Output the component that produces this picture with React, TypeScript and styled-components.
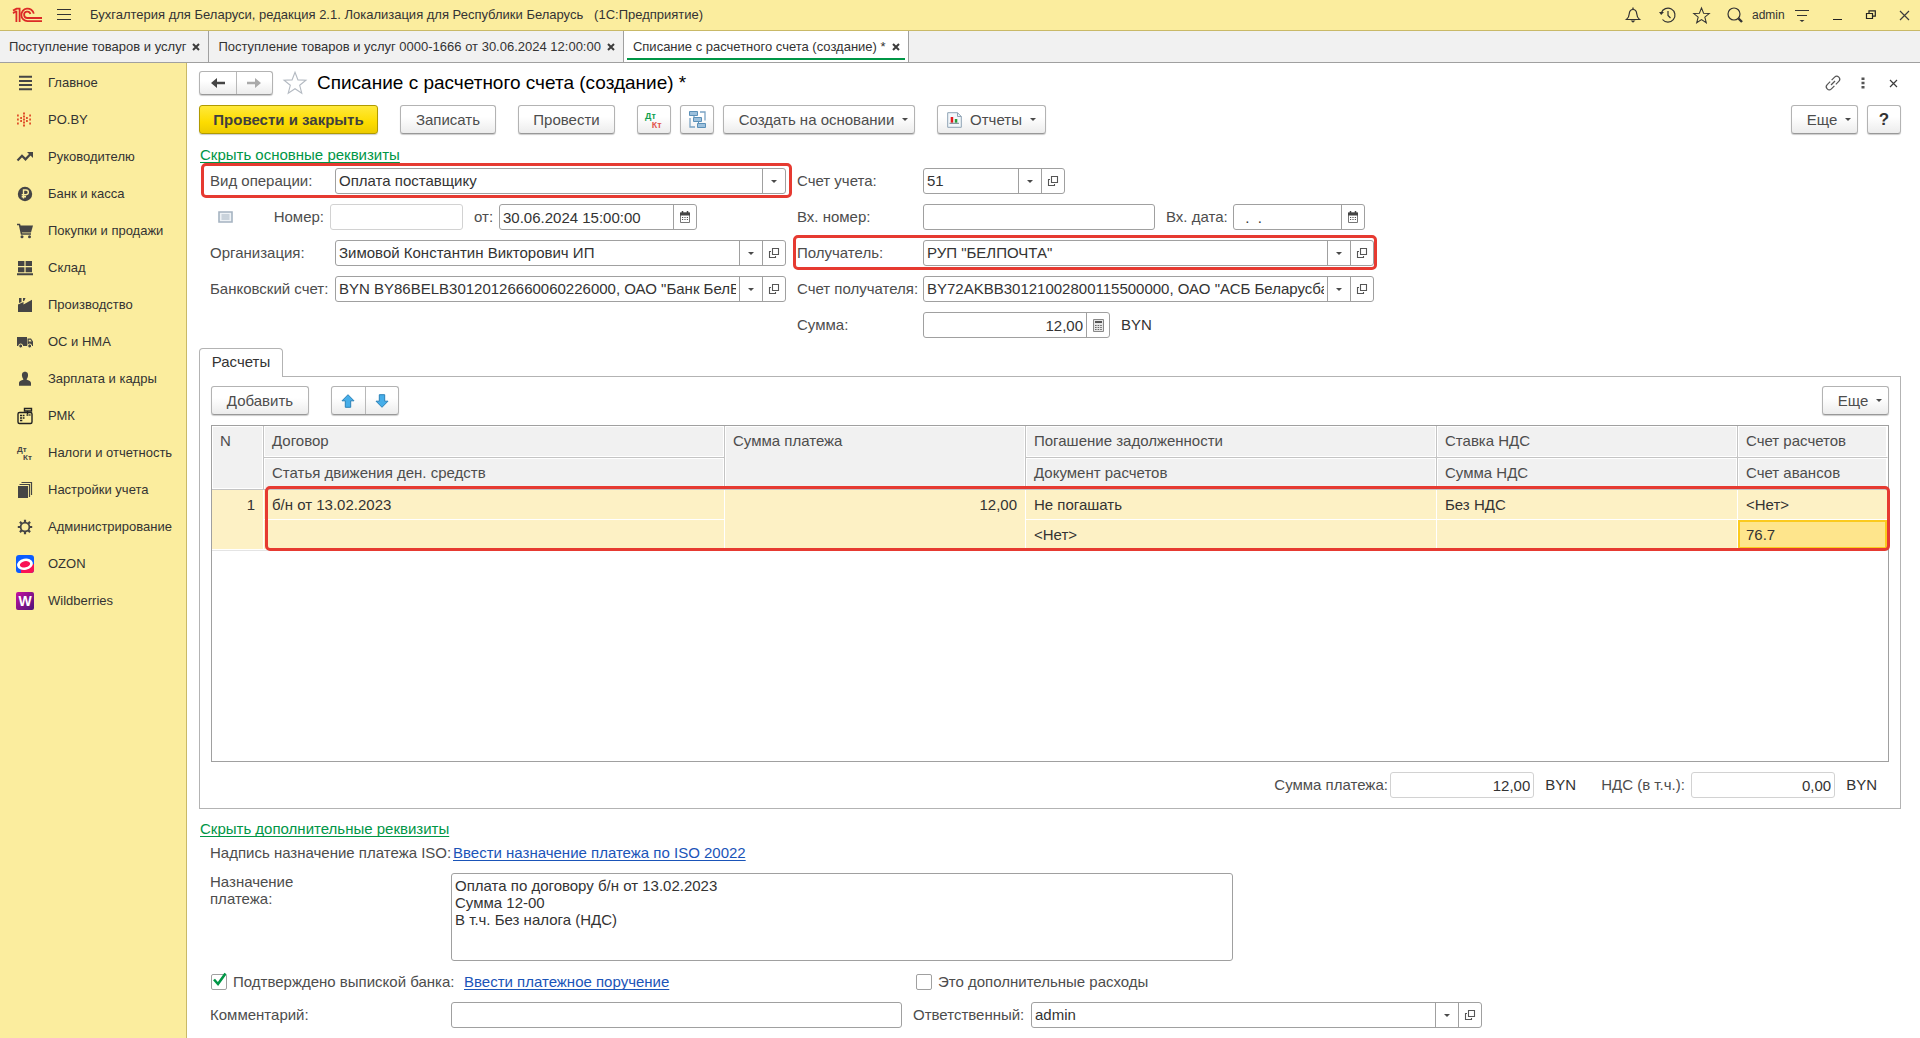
import React, { useState } from "react";
import type { ReactNode } from "react";
import styled, { createGlobalStyle, css } from "styled-components";

const color = {
  yellow: "#fbed9e",
  yellowEdge: "#c9b967",
  text: "#333333",
  label: "#4d4d4d",
  line: "#a0a0a0",
  green: "#009646",
  blue: "#1a54b8",
  red: "#e63a31",
};

const GlobalStyle = createGlobalStyle`
  *, *::before, *::after { box-sizing: border-box; }
  body { margin: 0; background: #fff; }
  body, button, input, select, textarea {
    font-family: "Liberation Sans", Arial, sans-serif;
    font-size: 15px;
    line-height: 18px;
    color: ${color.text};
  }
  svg { display: block; flex: none; overflow: visible; }
`;

/* ---------- shell ---------- */

const Shell = styled.div`
  min-height: 100vh;
  display: flex;
  flex-direction: column;
`;

const TopBar = styled.header`
  height: 31px;
  flex: none;
  display: flex;
  align-items: center;
  padding-left: 12px;
  background: ${color.yellow};
  border-bottom: 1px solid ${color.yellowEdge};
`;

const AppTitle = styled.h1`
  margin: 0;
  padding-left: 5px;
  flex: 1;
  font-size: 13px;
  font-weight: normal;
`;

const IconButton = styled.button<{ $w?: number }>`
  width: ${(p) => p.$w ?? 34}px;
  height: 24px;
  padding: 0;
  border: 0;
  background: none;
  display: flex;
  align-items: center;
  justify-content: center;
`;

const UserName = styled.span`
  width: 32px;
  text-align: center;
  font-size: 12px;
`;

const TabBar = styled.nav`
  height: 32px;
  flex: none;
  display: flex;
  background: #f1f1f1;
  border-bottom: 1px solid ${color.line};
`;

const WindowTab = styled.div<{ $active?: boolean }>`
  display: flex;
  align-items: center;
  padding: 0 2px 0 9px;
  border-right: 1px solid ${color.line};
  ${(p) =>
    p.$active &&
    css`
      background: linear-gradient(${color.green}, ${color.green}) 50% 27px / calc(100% - 6px) 2px no-repeat #fff;
    `}
`;

const TabTitle = styled.button`
  padding: 0;
  border: 0;
  background: none;
  font-size: 13px;
  white-space: nowrap;
`;

const TabClose = styled.button`
  width: 20px;
  height: 20px;
  padding: 0;
  border: 0;
  background: none;
  display: flex;
  align-items: center;
  justify-content: center;
`;

const Columns = styled.div`
  flex: 1;
  display: flex;
`;

const Sidebar = styled.nav`
  width: 187px;
  flex: none;
  padding-top: 1px;
  background: ${color.yellow};
  border-right: 1px solid ${color.yellowEdge};
`;

const SideLink = styled.a`
  height: 37px;
  display: flex;
  align-items: center;
  gap: 14px;
  padding-left: 16px;
  font-size: 13px;
  color: ${color.text};
  text-decoration: none;
  white-space: nowrap;
`;

const Main = styled.main`
  flex: 1;
  min-width: 0;
  display: flex;
  flex-direction: column;
  padding: 8px 19px 10px 12px;
`;

/* ---------- buttons ---------- */

const raised = css`
  border: 1px solid #b3b3b3;
  border-bottom-color: #989898;
  border-radius: 3px;
  background: linear-gradient(#fff 40%, #ececec);
  box-shadow: 0 1px 1px rgba(0, 0, 0, 0.2);
  color: ${color.label};
`;

const Button = styled.button<{ $w: number; $primary?: boolean; $menu?: boolean; $left?: number }>`
  ${raised}
  width: ${(p) => p.$w}px;
  height: 29px;
  padding: 0 0 0 ${(p) => (p.$menu ? 9 : 0)}px;
  margin-left: ${(p) => p.$left ?? 0}px;
  display: flex;
  align-items: center;
  justify-content: center;
  gap: 8px;
  white-space: nowrap;
  ${(p) =>
    p.$primary &&
    css`
      border-color: #b09a00;
      background: linear-gradient(#ffe93b, #fddc00 60%, #edcb00);
      font-weight: bold;
      color: #3f3f3f;
    `}
`;

const ButtonPair = styled.div<{ $w: number; $h: number; $left?: number }>`
  ${raised}
  width: ${(p) => p.$w}px;
  height: ${(p) => p.$h}px;
  margin-left: ${(p) => p.$left ?? 0}px;
  display: flex;
`;

const PairHalf = styled.button`
  flex: 1;
  padding: 0;
  border: 0;
  background: none;
  display: flex;
  align-items: center;
  justify-content: center;
  & + & { border-left: 1px solid #b8b8b8; }
`;

const Caret = styled.i`
  border: 3px solid transparent;
  border-top: 3px solid #4a4a4a;
  border-bottom: 0;
`;

const HelpMark = styled.b`
  font-size: 17px;
  color: #333;
`;

/* ---------- page parts ---------- */

const TitleRow = styled.div`
  height: 24px;
  display: flex;
  align-items: center;
  margin-right: -7px;
`;

const FormTitle = styled.h2`
  margin: 0;
  flex: 1;
  font-size: 19px;
  line-height: 24px;
  font-weight: normal;
  color: #000;
`;

const Toolbar = styled.div<{ $top?: number }>`
  display: flex;
  align-items: center;
  margin-top: ${(p) => p.$top ?? 0}px;
`;

const Spacer = styled.div`
  flex: 1;
`;

const Link = styled.a<{ $green?: boolean }>`
  color: ${(p) => (p.$green ? color.green : color.blue)};
  text-decoration: underline;
  text-decoration-thickness: 1px;
  text-underline-offset: 2px;
  text-decoration-skip-ink: none;
`;

const GroupLink = styled.div<{ $top: number }>`
  margin-top: ${(p) => p.$top}px;
  padding-left: 1px;
  height: 18px;
`;

const FormGrid = styled.div`
  display: grid;
  grid-template-columns: 576px 577px;
  gap: 10px 11px;
  margin: 4px 0 0 11px;
`;

const Row = styled.div<{ $top?: number }>`
  position: relative;
  display: flex;
  align-items: center;
  margin-top: ${(p) => p.$top ?? 0}px;
`;

const DetailRow = styled(Row)`
  margin-left: 11px;
`;

const Marked = styled(Row)<{ $lead: number; $tail: number }>`
  &::after {
    content: "";
    position: absolute;
    inset: -5px -${(p) => p.$tail}px -4px -${(p) => p.$lead}px;
    border: 3px solid ${color.red};
    border-radius: 5px;
    pointer-events: none;
  }
`;

const Label = styled.label<{ $w?: number; $pad?: number; $end?: boolean }>`
  width: ${(p) => (p.$w ? `${p.$w}px` : "auto")};
  padding-left: ${(p) => p.$pad ?? 0}px;
  ${(p) => p.$end && "text-align: right; padding-right: 6px;"}
  flex: none;
  color: ${color.label};
  white-space: nowrap;
`;

const Frame = styled.div<{ $w: number; $pale?: boolean }>`
  width: ${(p) => p.$w}px;
  height: 26px;
  flex: none;
  display: flex;
  overflow: hidden;
  background: #fff;
  border: 1px solid ${(p) => (p.$pale ? "#d2d2d2" : color.line)};
  border-radius: 3px;
`;

const bare = css`
  flex: 1;
  min-width: 0;
  width: 0;
  height: 24px;
  margin: 0 3px;
  padding: 0;
  border: 0;
  outline: 0;
  background: none;
`;

const TextInput = styled.input<{ $right?: boolean }>`
  ${bare}
  text-align: ${(p) => (p.$right ? "right" : "left")};
  &::placeholder { color: ${color.text}; opacity: 1; }
`;

const Select = styled.select`
  ${bare}
  appearance: none;
  text-overflow: clip;
`;

const FieldButton = styled.button`
  width: 23px;
  flex: none;
  padding: 0;
  border: 0;
  border-left: 1px solid ${color.line};
  background: none;
  display: flex;
  align-items: center;
  justify-content: center;
`;

const Unit = styled.span`
  padding-left: 11px;
`;

/* ---------- tabular section ---------- */

const PageTab = styled.button`
  align-self: flex-start;
  z-index: 1;
  width: 84px;
  height: 29px;
  margin: 10px 0 -1px;
  padding: 0 0 2px;
  border: 1px solid #b3b3b3;
  border-bottom: 0;
  border-radius: 4px 4px 0 0;
  background: #fff;
`;

const Panel = styled.section`
  flex: 1;
  display: flex;
  flex-direction: column;
  padding: 9px 11px 10px;
  border: 1px solid #b3b3b3;
`;

const TableBox = styled.div`
  flex: 1;
  margin: 10px 0;
  border: 1px solid ${color.line};
`;

const TableMark = styled.div`
  position: relative;
  &::after {
    content: "";
    position: absolute;
    inset: 60px -2px 0 53px;
    border: 3px solid ${color.red};
    border-radius: 5px;
    pointer-events: none;
  }
`;

const Table = styled.table`
  width: 100%;
  table-layout: fixed;
  border-spacing: 0;
  border-bottom: 1px solid #e4e4e4;
`;

const HeadCell = styled.th`
  height: 32px;
  padding: 0 0 2px 8px;
  background: #f1f1f1;
  border-right: 1px solid #c4c4c4;
  border-bottom: 1px solid #c4c4c4;
  box-shadow: inset 0 0 0 1px #fff;
  font-weight: normal;
  text-align: left;
  color: ${color.label};
  &[rowspan] { vertical-align: top; padding-top: 6px; }
  &:last-child { border-right-color: #fff; }
`;

const Cell = styled.td<{ $right?: boolean; $current?: boolean }>`
  height: 30px;
  padding: 0 8px;
  background: #fdf1c5;
  border-right: 1px solid #fff;
  border-bottom: 1px solid #fff;
  text-align: ${(p) => (p.$right ? "right" : "left")};
  &[rowspan] { vertical-align: top; padding-top: 6px; }
  ${(p) =>
    p.$current &&
    css`
      background: #fee58c;
      box-shadow: inset 0 0 0 2px #fbca1e;
    `}
`;

const Totals = styled.div`
  display: flex;
  align-items: center;
  justify-content: flex-end;
  padding-right: 12px;
`;

const Memo = styled.textarea`
  width: 782px;
  height: 88px;
  padding: 3px;
  border: 1px solid ${color.line};
  border-radius: 3px;
  outline: 0;
  resize: none;
  line-height: 17px;
`;

const MemoLabel = styled(Label)`
  align-self: flex-start;
  line-height: 17px;
`;

const Check = styled.input`
  appearance: none;
  width: 16px;
  height: 16px;
  margin: 0 6px 0 1px;
  border: 1px solid ${color.line};
  border-radius: 2px;
  background: #fff;
`;

const CheckHolder = styled.span`
  position: relative;
  display: flex;
  svg { position: absolute; left: 2px; top: -2px; pointer-events: none; }
`;

const CheckLink = styled.span`
  width: 451px;
`;

/* ---------- icons ---------- */

const dark = "#454545";

const Svg = ({ w, h, children }: { w: number; h: number; children: ReactNode }) => (
  <svg width={w} height={h} viewBox={`0 0 ${w} ${h}`} fill="none" aria-hidden="true">
    {children}
  </svg>
);

const Logo = () => (
  <Svg w={31} h={16}>
    <g stroke="#dc2a26" strokeWidth="1.8">
      <path d="M1 6.2 L3.6 4.6 H4.4 V15 M1 3.6 L4.6 1.6 H7.6 V15" />
      <path d="M21.8 6.6 A6.3 6.3 0 1 0 15.5 14.2 H30" />
      <path d="M18.4 7 A3.2 3.2 0 1 0 15.4 11 H30" />
    </g>
  </Svg>
);

const Bars = () => (
  <Svg w={14} h={12}>
    <path d="M0 0.5H14M0 5.5H14M0 10.5H14" stroke="#333" />
  </Svg>
);

const Bell = () => (
  <Svg w={16} h={16}>
    <path d="M1.5 12.5 Q4 10.5 4.2 7 Q4.6 2.5 8 2.5 Q11.4 2.5 11.8 7 Q12 10.5 14.5 12.5 Z" stroke="#333" strokeWidth="1.2" />
    <path d="M7 1.2H9" stroke="#333" />
    <path d="M5.5 13.5H10.5L8 15.8Z" fill="#333" />
  </Svg>
);

const History = () => (
  <Svg w={17} h={16}>
    <path d="M2.3 6 A7 7 0 1 1 3.5 12.5" stroke="#333" strokeWidth="1.2" />
    <path d="M0 5H5L2.2 8Z" fill="#333" />
    <path d="M9 4V8.5L11.5 11" stroke="#333" strokeWidth="1.2" />
  </Svg>
);

const Star = ({ size, stroke }: { size: number; stroke: string }) => (
  <svg width={size} height={size} viewBox="0 0 22 22" fill="none" aria-hidden="true">
    <path
      d="M11 1.2L13.7 8.1L21 8.5L15.3 13.1L17.2 20.3L11 16.3L4.8 20.3L6.7 13.1L1 8.5L8.3 8.1Z"
      stroke={stroke}
      strokeWidth={20 / size + 0.2}
    />
  </svg>
);

const Search = () => (
  <Svg w={16} h={16}>
    <circle cx="7" cy="7" r="6" stroke="#333" strokeWidth="1.2" />
    <path d="M11.5 11.5L15 15" stroke="#333" strokeWidth="2.4" />
  </Svg>
);

const MenuDown = () => (
  <Svg w={14} h={14}>
    <path d="M0 2.5H14M2 7.5H12" stroke="#333" strokeWidth="1.2" />
    <path d="M4.5 12H9.5L7 14Z" fill="#333" />
  </Svg>
);

const Minimize = () => (
  <Svg w={9} h={10}>
    <path d="M0 9.5H9" stroke="#222" />
  </Svg>
);

const Restore = () => (
  <Svg w={10} h={10}>
    <path d="M0.5 3.5H6.5V8.5H0.5ZM3 3V0.8H9.3V6.2H7" stroke="#222" strokeWidth="1.2" />
  </Svg>
);

const Cross = ({ size, width }: { size: number; width: number }) => (
  <Svg w={size} h={size}>
    <path d={`M1 1L${size - 1} ${size - 1}M${size - 1} 1L1 ${size - 1}`} stroke="#3c3c3c" strokeWidth={width} />
  </Svg>
);

const Arrow = ({ flip, fill }: { flip?: boolean; fill: string }) => (
  <Svg w={14} h={12}>
    <path d={flip ? "M14 6L8 1V4.7H0V7.3H8V11Z" : "M0 6L6 1V4.7H14V7.3H6V11Z"} fill={fill} />
  </Svg>
);

const Chain = () => (
  <Svg w={16} h={16}>
    <g stroke="#555" strokeWidth="1.2">
      <path d="M6.6 5.2L9.6 2.2A2.9 2.9 0 0 1 13.8 6.4L10.8 9.4" />
      <path d="M9.4 10.8L6.4 13.8A2.9 2.9 0 0 1 2.2 9.6L5.2 6.6" />
      <path d="M6 10L10 6" />
    </g>
  </Svg>
);

const Dots = () => (
  <Svg w={4} h={12}>
    <path d="M0.5 0.5H3.5V3H0.5ZM0.5 4.7H3.5V7.2H0.5ZM0.5 9H3.5V11.5H0.5Z" fill="#555" />
  </Svg>
);

const OpenIcon = () => (
  <Svg w={12} h={12}>
    <path d="M4.5 1.5H10.5V7.5H4.5ZM3 4.5H1.5V10.5H7.5V9" stroke="#555" strokeWidth="1.1" />
  </Svg>
);

const Calendar = () => (
  <Svg w={12} h={12}>
    <path d="M1.5 2H10.5V11.5H1.5Z" stroke="#777" />
    <path d="M1 1.5H11V4.5H1Z" fill="#444" />
    <path d="M3.5 0V2M8.5 0V2" stroke="#444" strokeWidth="1.5" />
    <path d="M3 6.5H9.5M3 8.5H9.5" stroke="#555" strokeDasharray="1.2 1.2" />
  </Svg>
);

const Calculator = () => (
  <Svg w={11} h={13}>
    <path d="M0.5 0.5H10.5V12.5H0.5Z" fill="#e6e6e6" stroke="#888" />
    <path d="M2 2H9V4H2Z" fill="#555" />
    <path d="M2 6.5H9M2 8.5H9M2 10.5H9" stroke="#666" strokeDasharray="1.6 1" />
  </Svg>
);

const ListIcon = () => (
  <Svg w={15} h={12}>
    <path d="M1 1H14V11H1Z" fill="#eef2f6" stroke="#a5b3c1" strokeWidth="1.6" />
    <path d="M3.5 4H11.5M3.5 6H11.5M3.5 8H11.5" stroke="#a5b3c1" />
  </Svg>
);

const BlueArrow = ({ down }: { down?: boolean }) => (
  <Svg w={14} h={14}>
    <path
      d={down ? "M7 13.3L1 7.2H4.3V0.7H9.7V7.2H13Z" : "M7 0.7L1 6.8H4.3V13.3H9.7V6.8H13Z"}
      fill="#46aee9"
      stroke="#2c82b8"
      strokeLinejoin="round"
    />
  </Svg>
);

const DebitCredit = ({ size, a, b }: { size: number; a: string; b: string }) => (
  <svg width={size} height={size} viewBox="0 0 18 18" aria-hidden="true">
    <text x="1" y="8" fontSize="8" fontWeight="bold" fontFamily="Liberation Sans" fill={a}>Дт</text>
    <text x="7" y="16" fontSize="8" fontWeight="bold" fontFamily="Liberation Sans" fill={b}>Кт</text>
  </svg>
);

const Structure = () => (
  <Svg w={17} h={17}>
    <path d="M0.5 0.5H8.5V4.5H0.5ZM4.5 6.5H12.5V10.5H4.5ZM8.5 12.5H16.5V16.5H8.5Z" fill="#9cc0dc" stroke="#5b90b8" />
    <path d="M11 1H16V9.5M6 16H1V7" stroke="#7aa3c3" strokeWidth="1.3" />
    <path d="M5 4.5V6M9.5 10.5V12.5" stroke="#5b90b8" />
  </Svg>
);

const Report = () => (
  <Svg w={15} h={16}>
    <path d="M0.7 0.7H10.5L14.3 4.5V15.3H0.7Z" fill="#f2f7fb" stroke="#8fa3b4" />
    <path d="M10.5 0.7V4.5H14.3" stroke="#8fa3b4" />
    <path d="M3.7 5H6.2V10.7H3.7Z" fill="#e5181b" />
    <path d="M7.8 7H10.3V10.7H7.8Z" fill="#2a9d38" />
    <path d="M2.5 11.3H12" stroke="#71808c" />
  </Svg>
);

const side: { title: string; icon: ReactNode }[] = [
  {
    title: "Главное",
    icon: <path d="M3 2.8H16M3 6.9H16M3 11.1H16M3 15.2H16" stroke={dark} strokeWidth="2" />,
  },
  {
    title: "PO.BY",
    icon: (
      <path
        d="M7 2.5h2M7 5.5h2M7 8.5h2M7 11.5h2M7 14.5h2M4.2 7h1.8M10 7h1.8M4.2 10h1.8M10 10h1.8M1 4.5h1.8M13.2 4.5h1.8M1 8.5h1.8M13.2 8.5h1.8M1 12.5h1.8M13.2 12.5h1.8"
        stroke="#e0502b"
        strokeWidth="1.8"
      />
    ),
  },
  {
    title: "Руководителю",
    icon: (
      <>
        <path d="M1.5 12.5L6 7.8L9.5 11.3L14.5 6" stroke={dark} strokeWidth="2.2" />
        <path d="M11 4H17V10Z" fill={dark} />
      </>
    ),
  },
  {
    title: "Банк и касса",
    icon: (
      <>
        <circle cx="9" cy="9" r="7.2" fill={dark} />
        <path d="M7.5 13.5V5H10A2.3 2.3 0 0 1 10 9.7H5.7M5.7 11.7H10" stroke={color.yellow} strokeWidth="1.4" />
      </>
    ),
  },
  {
    title: "Покупки и продажи",
    icon: (
      <>
        <path d="M1 2.5H3.5L5.5 12H15" stroke={dark} strokeWidth="1.5" />
        <path d="M3.5 3.5H17L15 10.5H5.3Z" fill={dark} />
        <circle cx="6" cy="14.7" r="1.5" fill={dark} />
        <circle cx="13.5" cy="14.7" r="1.5" fill={dark} />
      </>
    ),
  },
  {
    title: "Склад",
    icon: <path d="M2 2H8.4V7H2ZM9.6 2H16V7H9.6ZM2 8.2H8.4V13.2H2ZM9.6 8.2H16V13.2H9.6ZM1 14.3H17V16.3H1Z" fill={dark} />,
  },
  {
    title: "Производство",
    icon: <path d="M2 16V8.5L7.5 6V8.5L16 3.8V16ZM3 2H5.5V6L3 7ZM7 2H9.5L8.5 4.5L7 5.2Z" fill={dark} />,
  },
  {
    title: "ОС и НМА",
    icon: (
      <>
        <path d="M1 4H11V13H1ZM11.5 5.5H15L17 8.5V13H11.5Z" fill={dark} />
        <path d="M12.7 6.7H14.5L15.6 8.5H12.7Z" fill={color.yellow} />
        <circle cx="4.7" cy="13" r="2" fill={dark} stroke={color.yellow} />
        <circle cx="13.7" cy="13" r="2" fill={dark} stroke={color.yellow} />
      </>
    ),
  },
  {
    title: "Зарплата и кадры",
    icon: <path d="M9 1.8C11.6 1.8 12.3 4 12 6C11.7 8 10.8 8.6 10.6 9.3C11 10.5 15 10.5 15 13V15.8H3V13C3 10.5 7 10.5 7.4 9.3C7.2 8.6 6.3 8 6 6C5.7 4 6.4 1.8 9 1.8Z" fill={dark} />,
  },
  {
    title: "РМК",
    icon: (
      <>
        <rect x="2" y="5.5" width="14" height="11" rx="1.5" stroke="#222" strokeWidth="1.4" />
        <path d="M8.5 1.5H15.5V4H8.5ZM11.5 4V7" stroke="#222" strokeWidth="1.4" />
        <path d="M4 8.5H8.5M4 11H8.5M4 13.5H7M10.5 8H14.5" stroke="#222" strokeWidth="1.4" strokeDasharray="2 0.7" />
      </>
    ),
  },
  { title: "Налоги и отчетность", icon: <DebitCredit size={18} a={dark} b={dark} /> },
  {
    title: "Настройки учета",
    icon: (
      <>
        <path d="M2 5H12V17H2Z" fill={dark} />
        <path d="M3.5 3.5H13.5V16M5.5 1.5H15.5V14" stroke={dark} strokeWidth="1.2" />
      </>
    ),
  },
  {
    title: "Администрирование",
    icon: (
      <>
        <circle cx="9" cy="9" r="4.4" stroke={dark} strokeWidth="1.8" />
        <path
          d="M9 1.8V4.5M9 13.5V16.2M1.8 9H4.5M13.5 9H16.2M3.9 3.9L5.8 5.8M12.2 12.2L14.1 14.1M14.1 3.9L12.2 5.8M5.8 12.2L3.9 14.1"
          stroke={dark}
          strokeWidth="2.2"
        />
      </>
    ),
  },
  {
    title: "OZON",
    icon: (
      <>
        <rect width="18" height="18" rx="3" fill="#0b5cff" />
        <path d="M18 9V15A3 3 0 0 1 15 18H5Q4 15 6 12Z" fill="#f91155" />
        <ellipse cx="9" cy="9.3" rx="8" ry="5.6" transform="rotate(-12 9 9.3)" fill="#fff" />
        <ellipse cx="9" cy="9.3" rx="5.2" ry="3.1" transform="rotate(-12 9 9.3)" fill="#f91155" />
      </>
    ),
  },
  {
    title: "Wildberries",
    icon: (
      <>
        <defs>
          <linearGradient id="wb" x1="0" y1="0" x2="1" y2="1">
            <stop offset="0" stopColor="#c5119f" />
            <stop offset="1" stopColor="#4b1378" />
          </linearGradient>
        </defs>
        <rect width="18" height="18" rx="2" fill="url(#wb)" />
        <text x="9" y="14" fontSize="14" fontWeight="bold" fontFamily="Liberation Sans" textAnchor="middle" fill="#fff">W</text>
      </>
    ),
  },
];

/* ---------- fields ---------- */

type FieldProps = { id: string; w: number; value?: string };

const DropField = ({ id, w, value = "", open }: FieldProps & { open?: boolean }) => (
  <Frame $w={w}>
    <Select id={id} defaultValue={value}>
      <option value={value}>{value}</option>
    </Select>
    <FieldButton type="button" aria-label="Выбрать из списка"><Caret /></FieldButton>
    {open && <FieldButton type="button" aria-label="Открыть"><OpenIcon /></FieldButton>}
  </Frame>
);

const TextField = ({
  id, w, value = "", right, pale, placeholder, icon, action,
}: FieldProps & { right?: boolean; pale?: boolean; placeholder?: string; icon?: ReactNode; action?: string }) => (
  <Frame $w={w} $pale={pale}>
    <TextInput id={id} defaultValue={value} placeholder={placeholder} $right={right} readOnly={pale} />
    {icon && <FieldButton type="button" aria-label={action}>{icon}</FieldButton>}
  </Frame>
);

const windows = [
  "Поступление товаров и услуг",
  "Поступление товаров и услуг 0000-1666 от 30.06.2024 12:00:00",
  "Списание с расчетного счета (создание) *",
];

export default function App() {
  const [confirmed, setConfirmed] = useState(true);
  return (
    <Shell>
      <GlobalStyle />
      <TopBar>
        <Logo />
        <IconButton $w={42} aria-label="Меню"><Bars /></IconButton>
        <AppTitle>Бухгалтерия для Беларуси, редакция 2.1. Локализация для Республики Беларусь &nbsp; (1С:Предприятие)</AppTitle>
        <IconButton aria-label="Уведомления"><Bell /></IconButton>
        <IconButton aria-label="История"><History /></IconButton>
        <IconButton aria-label="Избранное"><Star size={17} stroke="#333" /></IconButton>
        <IconButton aria-label="Поиск"><Search /></IconButton>
        <UserName>admin</UserName>
        <IconButton $w={36} aria-label="Настройки"><MenuDown /></IconButton>
        <IconButton aria-label="Свернуть"><Minimize /></IconButton>
        <IconButton aria-label="Восстановить"><Restore /></IconButton>
        <IconButton $w={32} aria-label="Закрыть программу"><Cross size={11} width={1.2} /></IconButton>
      </TopBar>
      <TabBar>
        {windows.map((title, i) => (
          <WindowTab key={title} $active={i === 2}>
            <TabTitle>{title}</TabTitle>
            <TabClose aria-label={`Закрыть: ${title}`}><Cross size={8} width={2} /></TabClose>
          </WindowTab>
        ))}
      </TabBar>
      <Columns>
        <Sidebar>
          {side.map((s) => (
            <SideLink key={s.title} href="#">
              <Svg w={18} h={18}>{s.icon}</Svg>
              {s.title}
            </SideLink>
          ))}
        </Sidebar>
        <Main>
          <TitleRow>
            <ButtonPair $w={74} $h={24}>
              <PairHalf aria-label="Назад"><Arrow fill="#444" /></PairHalf>
              <PairHalf aria-label="Вперед"><Arrow flip fill="#aaa" /></PairHalf>
            </ButtonPair>
            <IconButton $w={44} aria-label="В избранное"><Star size={24} stroke="#b4bac2" /></IconButton>
            <FormTitle>Списание с расчетного счета (создание) *</FormTitle>
            <IconButton $w={30} aria-label="Ссылка"><Chain /></IconButton>
            <IconButton $w={30} aria-label="Действия"><Dots /></IconButton>
            <IconButton $w={30} aria-label="Закрыть"><Cross size={9} width={1.2} /></IconButton>
          </TitleRow>
          <Toolbar $top={10}>
            <Button $w={179} $primary>Провести и закрыть</Button>
            <Button $w={96} $left={22}>Записать</Button>
            <Button $w={97} $left={22}>Провести</Button>
            <Button $w={34} $left={22} aria-label="Дт/Кт"><DebitCredit size={20} a="#12a04e" b="#e2564e" /></Button>
            <Button $w={34} $left={9} aria-label="Структура"><Structure /></Button>
            <Button $w={192} $left={9} $menu>Создать на основании <Caret /></Button>
            <Button $w={109} $left={22}><Report />Отчеты <Caret /></Button>
            <Spacer />
            <Button $w={67} $menu>Еще <Caret /></Button>
            <Button $w={34} $left={9} aria-label="Справка"><HelpMark>?</HelpMark></Button>
          </Toolbar>

          <GroupLink $top={12}><Link href="#" $green>Скрыть основные реквизиты</Link></GroupLink>
          <FormGrid>
            <Marked $lead={9} $tail={6}>
              <Label $w={125} htmlFor="kind">Вид операции:</Label>
              <DropField id="kind" w={451} value="Оплата поставщику" />
            </Marked>
            <Row>
              <Label $w={126} htmlFor="account">Счет учета:</Label>
              <DropField id="account" w={142} value="51" open />
            </Row>
            <Row>
              <Label as="span" $w={23} $pad={8}><ListIcon /></Label>
              <Label $w={97} $end htmlFor="number">Номер:</Label>
              <TextField id="number" w={133} pale />
              <Label $w={36} $pad={11} htmlFor="date">от:</Label>
              <TextField id="date" w={198} value="30.06.2024 15:00:00" icon={<Calendar />} action="Календарь" />
            </Row>
            <Row>
              <Label $w={126} htmlFor="inNumber">Вх. номер:</Label>
              <TextField id="inNumber" w={232} />
              <Label $w={78} $pad={11} htmlFor="inDate">Вх. дата:</Label>
              <TextField id="inDate" w={132} placeholder="  .  ." icon={<Calendar />} action="Календарь" />
            </Row>
            <Row>
              <Label $w={125} htmlFor="org">Организация:</Label>
              <DropField id="org" w={451} value="Зимовой Константин Викторович ИП" open />
            </Row>
            <Marked $lead={4} $tail={3}>
              <Label $w={126} htmlFor="payee">Получатель:</Label>
              <DropField id="payee" w={451} value={'РУП "БЕЛПОЧТА"'} open />
            </Marked>
            <Row>
              <Label $w={125} htmlFor="bank">Банковский счет:</Label>
              <DropField id="bank" w={451} value={'BYN BY86BELB30120126660060226000, ОАО "Банк БелВЭБ"'} open />
            </Row>
            <Row>
              <Label $w={126} htmlFor="payeeBank">Счет получателя:</Label>
              <DropField id="payeeBank" w={451} value={'BY72AKBB30121002800115500000, ОАО "АСБ Беларусбанк"'} open />
            </Row>
            <span />
            <Row>
              <Label $w={126} htmlFor="sum">Сумма:</Label>
              <TextField id="sum" w={187} value="12,00" right icon={<Calculator />} action="Калькулятор" />
              <Unit>BYN</Unit>
            </Row>
          </FormGrid>

          <PageTab>Расчеты</PageTab>
          <Panel>
            <Toolbar>
              <Button $w={98}>Добавить</Button>
              <ButtonPair $w={68} $h={29} $left={22}>
                <PairHalf aria-label="Вверх"><BlueArrow /></PairHalf>
                <PairHalf aria-label="Вниз"><BlueArrow down /></PairHalf>
              </ButtonPair>
              <Spacer />
              <Button $w={67} $menu>Еще <Caret /></Button>
            </Toolbar>
            <TableBox>
              <TableMark>
                <Table>
                  <colgroup>
                    <col width="52" />
                    <col />
                    <col width="301" />
                    <col width="411" />
                    <col width="301" />
                    <col width="150" />
                  </colgroup>
                  <thead>
                    <tr>
                      <HeadCell rowSpan={2}>N</HeadCell>
                      <HeadCell>Договор</HeadCell>
                      <HeadCell rowSpan={2}>Сумма платежа</HeadCell>
                      <HeadCell>Погашение задолженности</HeadCell>
                      <HeadCell>Ставка НДС</HeadCell>
                      <HeadCell>Счет расчетов</HeadCell>
                    </tr>
                    <tr>
                      <HeadCell>Статья движения ден. средств</HeadCell>
                      <HeadCell>Документ расчетов</HeadCell>
                      <HeadCell>Сумма НДС</HeadCell>
                      <HeadCell>Счет авансов</HeadCell>
                    </tr>
                  </thead>
                  <tbody>
                    <tr>
                      <Cell rowSpan={2} $right>1</Cell>
                      <Cell>б/н от 13.02.2023</Cell>
                      <Cell rowSpan={2} $right>12,00</Cell>
                      <Cell>Не погашать</Cell>
                      <Cell>Без НДС</Cell>
                      <Cell>&lt;Нет&gt;</Cell>
                    </tr>
                    <tr>
                      <Cell />
                      <Cell>&lt;Нет&gt;</Cell>
                      <Cell />
                      <Cell $current>76.7</Cell>
                    </tr>
                  </tbody>
                </Table>
              </TableMark>
            </TableBox>
            <Totals>
              <Label $w={116} htmlFor="total">Сумма платежа:</Label>
              <TextField id="total" w={144} value="12,00" right pale />
              <Unit>BYN</Unit>
              <Label $w={115} $pad={25} htmlFor="vat">НДС (в т.ч.):</Label>
              <TextField id="vat" w={144} value="0,00" right pale />
              <Unit>BYN</Unit>
            </Totals>
          </Panel>

          <GroupLink $top={11}><Link href="#" $green>Скрыть дополнительные реквизиты</Link></GroupLink>
          <DetailRow $top={6}>
            <Label as="span" $w={243}>Надпись назначение платежа ISO:</Label>
            <Link href="#">Ввести назначение платежа по ISO 20022</Link>
          </DetailRow>
          <DetailRow $top={11}>
            <MemoLabel $w={241} htmlFor="memo">Назначение<br />платежа:</MemoLabel>
            <Memo id="memo" defaultValue={"Оплата по договору б/н от 13.02.2023\nСумма 12-00\nВ т.ч. Без налога (НДС)"} />
          </DetailRow>
          <DetailRow $top={12}>
            <CheckHolder>
              <Check id="confirmed" type="checkbox" checked={confirmed} onChange={() => setConfirmed(!confirmed)} />
              {confirmed && (
                <Svg w={15} h={15}>
                  <path d="M2 7.5L6 12L13.5 1.5" stroke="#009646" strokeWidth="2.6" />
                </Svg>
              )}
            </CheckHolder>
            <Label $w={231} htmlFor="confirmed">Подтверждено выпиской банка:</Label>
            <CheckLink><Link href="#">Ввести платежное поручение</Link></CheckLink>
            <Check id="extra" type="checkbox" />
            <Label htmlFor="extra">Это дополнительные расходы</Label>
          </DetailRow>
          <DetailRow $top={11}>
            <Label $w={241} htmlFor="comment">Комментарий:</Label>
            <TextField id="comment" w={451} />
            <Label $w={129} $pad={11} htmlFor="owner">Ответственный:</Label>
            <DropField id="owner" w={451} value="admin" open />
          </DetailRow>
        </Main>
      </Columns>
    </Shell>
  );
}
